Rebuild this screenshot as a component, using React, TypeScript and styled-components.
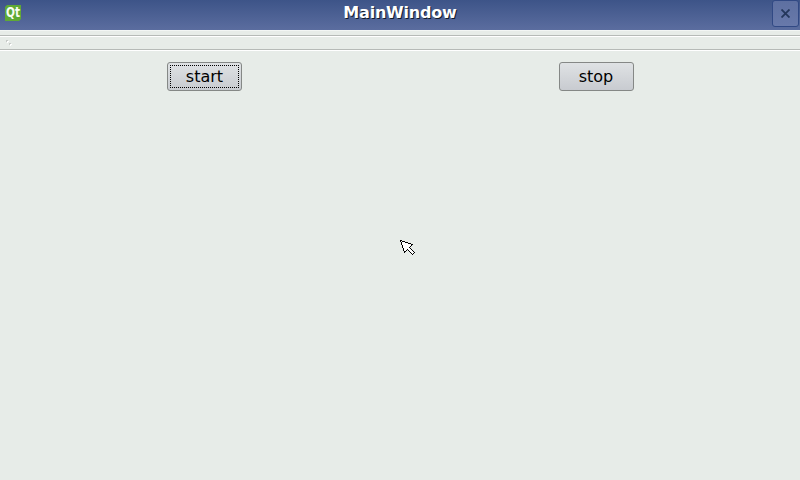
import React from "react";
import styled, { createGlobalStyle } from "styled-components";

const GlobalStyle = createGlobalStyle`
  * { box-sizing: border-box; }
  body { margin: 0; overflow: hidden; background: #e7ece8; }
`;

const Window = styled.main`
  position: relative;
  display: flex;
  flex-direction: column;
  width: 800px;
  height: 480px;
  background: #e7ece8;
  font-family: "DejaVu Sans", sans-serif;
  cursor: default;
`;

const TitleBar = styled.header`
  display: grid;
  grid-template-columns: 28px 1fr 28px;
  height: 30px;
  background: linear-gradient(#3d5488, #5b6d9f);
`;

const AppIcon = styled.svg`
  display: block;
  margin: 4px 0 0 4px;
  overflow: visible;
`;

const Title = styled.h1`
  margin: 0;
  padding-top: 3px;
  text-align: center;
  font-size: 16px;
  line-height: 19px;
  font-weight: 700;
  letter-spacing: -0.2px;
  color: #fff;
  text-shadow: 1px 1px 0 #111b2c;
`;

const CloseButton = styled.button`
  display: flex;
  align-items: center;
  justify-content: center;
  width: 27px;
  height: 27px;
  padding: 0;
  border: 1px solid #314984;
  border-radius: 3px;
  background: linear-gradient(#5e70a1, #6879aa);
`;

const MenuStrip = styled.div`
  height: 6px;
  border-top: 1px solid #f3f6f4;
  border-bottom: 1px solid #b6bab7;
`;

const ToolBar = styled.div`
  display: flex;
  height: 14px;
  padding: 3px 0 0 5px;
  border-top: 1px solid #fff;
  border-bottom: 1px solid #b6bab7;
  box-shadow: 0 1px 0 #fff;
`;

const Content = styled.section`
  display: grid;
  grid-template-columns: 392px 392px;
  justify-items: center;
  padding: 12px 8px 0 8px;
`;

const PushButton = styled.button<{ $focused?: boolean }>`
  display: flex;
  width: 75px;
  height: 29px;
  padding: 2px;
  border: 1px solid #858886;
  border-radius: 3px;
  background: linear-gradient(#dfe2e4, #c8cbd0);
  font: 16px "DejaVu Sans", sans-serif;
  color: #000;

  span {
    flex: 1;
    height: 23px;
    padding-left: ${({ $focused }) => ($focused ? "1px" : "0")};
    border: 1px dotted ${({ $focused }) => ($focused ? "#000" : "transparent")};
    line-height: 22px;
    text-align: center;
  }
`;

const Pointer = styled.svg`
  position: absolute;
  left: 399px;
  top: 239px;
`;

export default function App() {
  return (
    <Window>
      <GlobalStyle />
      <TitleBar>
        <AppIcon width="18" height="18" viewBox="0 0 18 18" aria-label="Qt">
          <path d="M3 1H17V15L15 17H1V3Z" fill="#5fa935" />
          <text
            x="2"
            y="13"
            fill="#f8fcf4"
            fontFamily="DejaVu Sans, sans-serif"
            fontSize="13.5"
            fontWeight="700"
            textLength="14"
            lengthAdjust="spacingAndGlyphs"
          >
            Qt
          </text>
        </AppIcon>
        <Title>MainWindow</Title>
        <CloseButton aria-label="Close">
          <svg width="9" height="9" viewBox="0 0 9 9" stroke="#24375b" strokeWidth="1.8">
            <path d="M0.5 0.5L8.5 8.5M8.5 0.5L0.5 8.5" />
          </svg>
        </CloseButton>
      </TitleBar>
      <MenuStrip />
      <ToolBar>
        <svg width="8" height="8" shapeRendering="crispEdges">
          <path d="M1 0h2v2h-2zM4 3h2v2h-2z" fill="#c6cac7" />
          <path d="M2 1h2v1h-1v1h-1zM5 4h2v1h-1v1h-1z" fill="#fff" />
        </svg>
      </ToolBar>
      <Content>
        <PushButton $focused><span>start</span></PushButton>
        <PushButton><span>stop</span></PushButton>
      </Content>
      <Pointer width="18" height="18" viewBox="0 0 18 18" shapeRendering="crispEdges">
        <path
          d="M1.5 1.5L13.5 5.5L10.5 8.5L15.5 13.5L13.5 15.5L8.5 10.5L5.5 13.5Z"
          fill="#fff"
          stroke="#000"
        />
      </Pointer>
    </Window>
  );
}
